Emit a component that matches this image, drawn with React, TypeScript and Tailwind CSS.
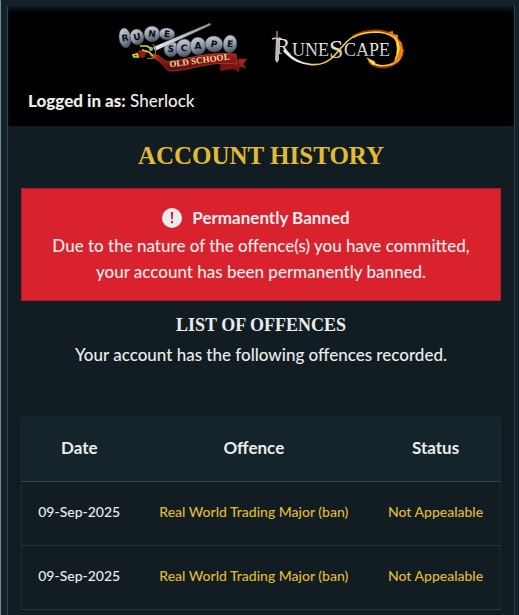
const stones = [
  { c: 'R', x: 16, y: 20, rx: 6, ry: 10, r: -8 },
  { c: 'U', x: 28, y: 19, rx: 7, ry: 8, r: -14 },
  { c: 'N', x: 43, y: 16, rx: 8, ry: 8, r: 6 },
  { c: 'E', x: 58, y: 16, rx: 8, ry: 6, r: 6 },
  { c: 'S', x: 62, y: 31, rx: 7, ry: 8, r: 8 },
  { c: 'C', x: 75, y: 30, rx: 8, ry: 9, r: 8 },
  { c: 'A', x: 89, y: 28, rx: 8, ry: 9, r: 0 },
  { c: 'P', x: 105, y: 26, rx: 9, ry: 8, r: 10 },
  { c: 'E', x: 121, y: 26, rx: 7, ry: 9, r: 6 },
]

function OldSchoolLogo() {
  return (
    <svg viewBox="0 0 145 60" className="h-[60px] w-[145px]" role="img" aria-label="Old School RuneScape">
      <defs>
        <linearGradient id="stone" x1="0" y1="0" x2="0.3" y2="1">
          <stop offset="0" stopColor="#d3dae6" />
          <stop offset="0.6" stopColor="#929cac" />
          <stop offset="1" stopColor="#525b69" />
        </linearGradient>
        <linearGradient id="ribbon" x1="0" y1="0" x2="0" y2="1">
          <stop offset="0" stopColor="#a81d1d" />
          <stop offset="1" stopColor="#5c0b0c" />
        </linearGradient>
        <linearGradient id="blade" x1="0" y1="1" x2="1" y2="0">
          <stop offset="0" stopColor="#eef1f3" />
          <stop offset="1" stopColor="#8c929a" />
        </linearGradient>
      </defs>
      {stones.map((s, i) => (
        <g key={i} transform={`rotate(${s.r} ${s.x} ${s.y})`}>
          <ellipse cx={s.x} cy={s.y} rx={s.rx} ry={s.ry} fill="url(#stone)" stroke="#30363f" strokeWidth="0.6" />
          <text x={s.x} y={s.y + 3} textAnchor="middle" fontSize="9" fontWeight="700" fill="#090b0f" className="font-['DejaVu_Sans']">
            {s.c}
          </text>
        </g>
      ))}
      <path d="M44 29 L101 5 L102 7 L46 33Z" fill="url(#blade)" stroke="#3b4047" strokeWidth="0.4" />
      <path d="M117 44 L138 41 L134 46 L137 50 L131 49 L130 54 L124 51 L111 53 L111 46Z" fill="#7b1213" stroke="#4d0a0a" strokeWidth="0.6" />
      <path d="M129 41 L138 41 L134 46 L137 50 L131 48Z" fill="#a92019" />
      <path d="M42 37 L49 37 L56 43 C70 45 90 33 127 36 L128 46 C98 43 84 52 63 53 C56 53 57 49 52 45Z" fill="url(#ribbon)" stroke="#c2552b" strokeWidth="0.6" />
      <path d="M26 36 L31 32 L38 34 L35 40 L30 39Z" fill="#8e1a18" />
      <path d="M40 37 L46 36 L50 42 L45 41Z" fill="#b32a1e" />
      <path d="M24 37 L28 36 L29 39 L25 39Z M31 28 L38 28 L43 31 M33 32 L40 34 L44 38" fill="none" stroke="#e2d32c" strokeWidth="1.7" />
      <path d="M44 26 Q48 31 46 37 M38 40 Q44 42 47 37" fill="none" stroke="#8a7c1c" strokeWidth="1.2" />
      <circle cx="42" cy="31" r="2" fill="#7cb7bd" />
      <path id="banner" d="M61 49 C76 48 96 44 119 42" fill="none" />
      <text fontSize="9" fontWeight="700" fill="#ecdfa4" className="font-['Liberation_Serif']">
        <textPath href="#banner">OLD SCHOOL</textPath>
      </text>
    </svg>
  )
}

function RuneScapeLogo() {
  return (
    <svg viewBox="0 0 145 50" className="h-[50px] w-[145px]" role="img" aria-label="RuneScape">
      <defs>
        <linearGradient id="silver" x1="0" y1="0" x2="0" y2="1">
          <stop offset="0" stopColor="#ffffff" />
          <stop offset="1" stopColor="#a9acae" />
        </linearGradient>
        <linearGradient id="flame" x1="0" y1="0" x2="1" y2="0">
          <stop offset="0" stopColor="#e8e8e8" />
          <stop offset="0.14" stopColor="#d8d8d0" />
          <stop offset="0.26" stopColor="#f5cf3c" />
          <stop offset="0.75" stopColor="#ffd23a" />
          <stop offset="1" stopColor="#ffb21c" />
        </linearGradient>
      </defs>
      <g fill="url(#silver)" className="font-['Liberation_Serif']">
        <text x="11" y="31" fontSize="23">R</text>
        <text x="28" y="33" fontSize="18">UNE</text>
        <text x="65" y="35" fontSize="26">S</text>
        <text x="80" y="33" fontSize="18">CAPE</text>
      </g>
      <path d="M12 15 L15 15 L15 37 L13 40 L11 37Z" fill="#b5bac0" />
      <path d="M8 16 Q13 14 18 16" fill="none" stroke="#c3c5c8" strokeWidth="1.5" />
      <path d="M13 8 V15" stroke="#8d5a48" strokeWidth="2" />
      <path d="M89 14 C96 10 104 8 112 8 C141 9 147 37 124 43 C117 45 109 43 105 38" fill="none" stroke="#c8500a" strokeWidth="3.4" opacity="0.7" />
      <path d="M22 28 C34 43 57 47 70 33 C83 19 85 10 112 9 C139 9 147 37 125 42 C117 44 109 42 105 37" fill="none" stroke="url(#flame)" strokeWidth="1.6" />
      <path d="M21 26 C29 36 36 40 46 41 C34 42 25 35 19 28Z" fill="#e8e8e8" />
      <path d="M124 9 L129 8 L129 11 L134 12 L134 17 L138 20 L137 25 L140 28 L137 30 L137 36 L134 35 L132 40 L128 41 L134 32 C137 23 132 15 124 9Z" fill="#ef7b11" />
      <path d="M130 13 Q140 24 131 37 Q136 25 130 13Z M103 35 L111 39 L109 42Z" fill="#ffe25a" stroke="#ffd23a" strokeWidth="0.8" />
    </svg>
  )
}

const offences = [
  { id: 1, date: '09-Sep-2025', offence: 'Real World Trading Major (ban)', status: 'Not Appealable' },
  { id: 2, date: '09-Sep-2025', offence: 'Real World Trading Major (ban)', status: 'Not Appealable' },
]

export default function App() {
  return (
    <div className="min-h-screen border-l border-[#6d8d91] bg-[#15212a] pt-[6px] pr-1 pl-[6px] font-['Lato',sans-serif] text-[17px] leading-[26px] font-medium text-[#ececec]">
      <div className="min-h-[609px] border-x border-[#2d3e48] bg-[#111d22]">
        <header className="bg-black px-5 pt-3 pb-3 shadow-[inset_0_4px_4px_#0a1b20]">
          <div className="flex items-center justify-center gap-[10px] pr-1">
            <OldSchoolLogo />
            <RuneScapeLogo />
          </div>
          <p className="pt-[10px]">
            <strong className="font-black">Logged in as:</strong> Sherlock
          </p>
        </header>
        <main className="px-[13px] pt-[14px] text-center">
          <h1 className="font-['Liberation_Serif',serif] text-[25px] leading-8 font-bold text-[#e1bb34]">ACCOUNT HISTORY</h1>
          <section className="mt-4 border border-[#a91e28] bg-[#da222e] px-5 pt-4 pb-[15px]">
            <h2 className="flex items-center justify-center gap-[10px] pr-[10px] font-bold">
              <svg viewBox="0 0 20 20" className="size-5" aria-hidden="true">
                <circle cx="10" cy="10" r="10" fill="#ececec" />
                <path d="M8.8 4h2.4l-.5 7.5H9.3zM9 13h2v2.2H9z" fill="#da222e" />
              </svg>
              Permanently Banned
            </h2>
            <p className="mt-[2px]">
              Due to the nature of the offence(s) you have committed, your account has been permanently banned.
            </p>
          </section>
          <h2 className="mt-3 font-['Liberation_Serif',serif] text-[18px] leading-6 font-bold">LIST OF OFFENCES</h2>
          <p className="mt-[5px]">Your account has the following offences recorded.</p>
          <table className="mt-[49px] w-full border-collapse border border-[#1b2b33] text-[14px]">
            <thead>
              <tr className="h-16 border-b border-[#34454e] bg-[#15242b] text-[17px]">
                <th scope="col" className="w-[24%] pb-1 font-bold">Date</th>
                <th scope="col" className="pb-1 font-bold">Offence</th>
                <th scope="col" className="w-[27%] pb-1 font-bold">Status</th>
              </tr>
            </thead>
            <tbody>
              {offences.map((o) => (
                <tr key={o.id} className="h-16 border-b border-[#29383f]">
                  <td className="pb-1">{o.date}</td>
                  <td className="pb-1 text-[#e1bb34]">{o.offence}</td>
                  <td className="pb-1 text-[#e1bb34]">{o.status}</td>
                </tr>
              ))}
            </tbody>
          </table>
        </main>
      </div>
    </div>
  )
}
